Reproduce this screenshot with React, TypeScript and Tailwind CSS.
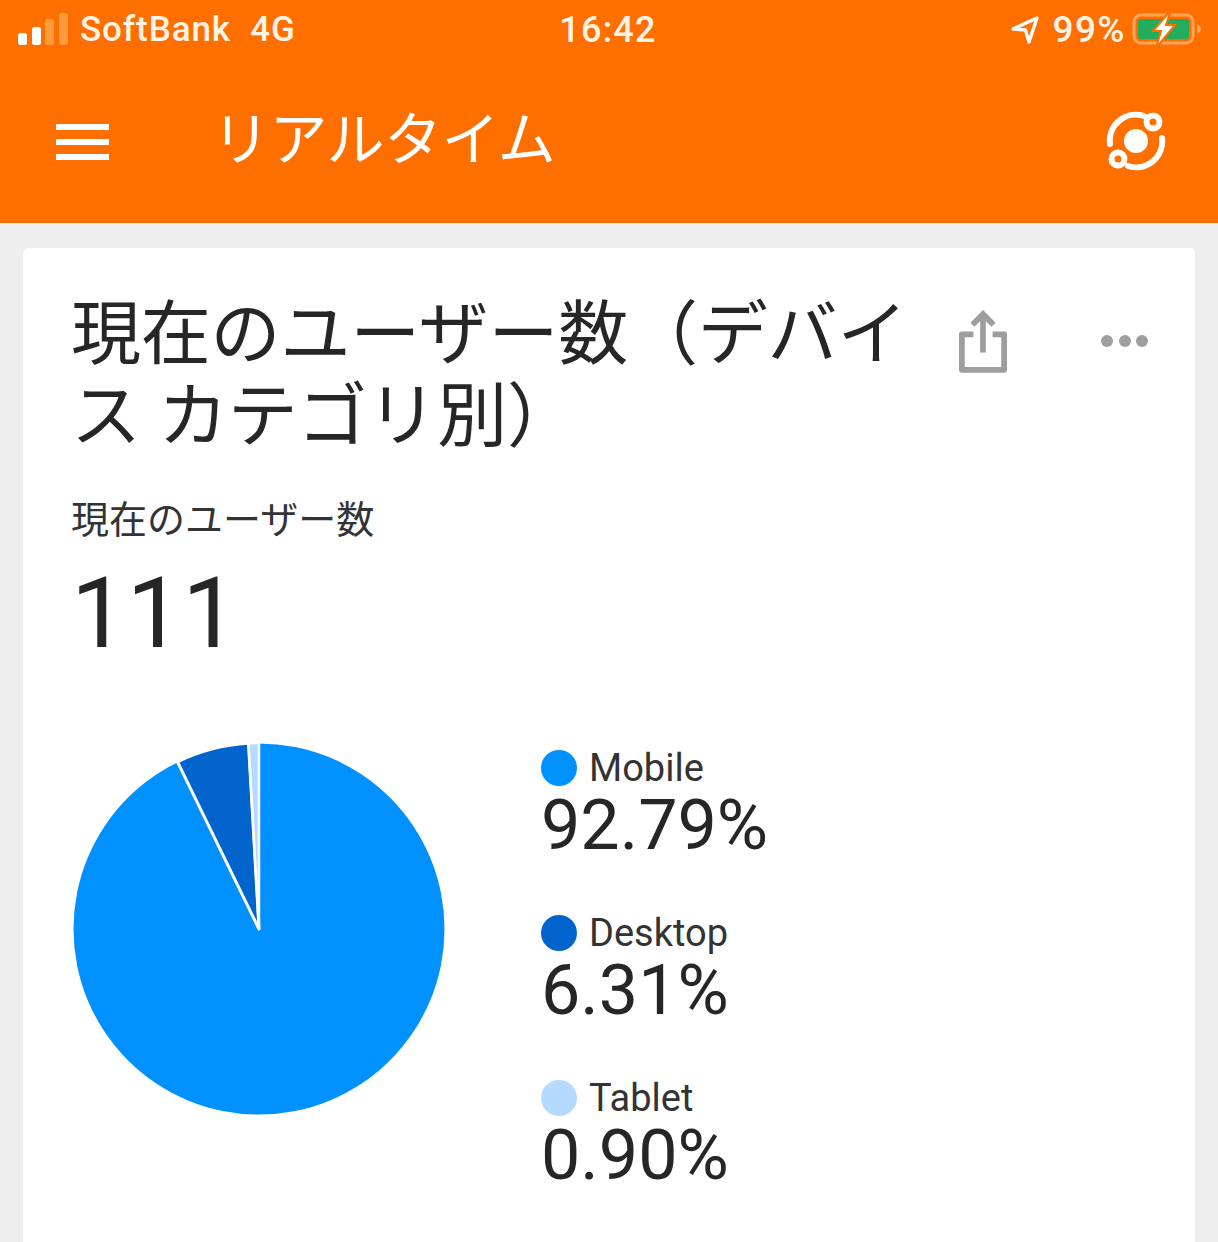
const JP = "font-['Roboto','Noto_Sans_CJK_JP',sans-serif]";

const slices = [
  { label: 'Mobile', value: '92.79%', dot: 'bg-[#0091ff]' },
  { label: 'Desktop', value: '6.31%', dot: 'bg-[#0064cc]' },
  { label: 'Tablet', value: '0.90%', dot: 'bg-[#b5daff]' },
];

function StatusBar() {
  return (
    <div className="flex h-[60px] items-center justify-between pl-[18px] pr-[14px] text-[#fff3e6]">
      <div className="flex w-[400px] items-center">
        <svg width="52" height="34" viewBox="0 0 52 34" className="mr-[10px] -mt-[2px]">
          <rect x="0" y="21" width="9" height="12" rx="2.5" fill="#fff" />
          <rect x="14" y="15" width="9" height="18" rx="2.5" fill="#fff" />
          <rect x="27" y="7" width="9" height="26" rx="2.5" fill="#ff9a3d" />
          <rect x="41" y="1" width="9" height="32" rx="2.5" fill="#ff9a3d" />
        </svg>
        <span className="font-['Roboto',sans-serif] text-[35px] font-medium tracking-[0.9px] whitespace-pre">SoftBank  4G</span>
      </div>
      <span className="-ml-[6px] font-['Roboto',sans-serif] text-[36px] font-medium tracking-[1.2px]">16:42</span>
      <div className="flex w-[400px] items-center justify-end">
        <svg width="28" height="28" viewBox="0 0 28 28" className="mr-[13px]" fill="none" stroke="#fff" strokeWidth="3.4" strokeLinejoin="round">
          <path d="M2 13 L26 2 L18 26 L14.5 14 Z" />
        </svg>
        <span className="mr-[6px] font-['Roboto',sans-serif] text-[37px] font-medium tracking-[1.4px]">99%</span>
        <svg width="72" height="38" viewBox="0 0 72 38" className="-mt-[2px]">
          <rect x="2" y="5" width="59" height="28" rx="7" fill="none" stroke="#ffa55c" strokeWidth="3" />
          <rect x="6" y="9" width="51" height="20" rx="3" fill="#22ad5c" />
          <path d="M65 14 Q69 16 69 19 Q69 22 65 24 Z" fill="#ffa55c" />
          <path d="M39 0 L21 21 L29 21 L24 38 L43 15 L34 15 Z" fill="#fff" stroke="#ff6f00" strokeWidth="2" />
        </svg>
      </div>
    </div>
  );
}

function Toolbar() {
  return (
    <div className="flex h-[163px] items-start pl-[56px] pr-[52px] pt-[44px] text-white">
      <div className="mt-[20px] flex w-[53px] flex-col gap-[9px]">
        <div className="h-[6px] bg-white" />
        <div className="h-[6px] bg-white" />
        <div className="h-[6px] bg-white" />
      </div>
      <h1 className={`${JP} ml-[103px] text-[58px] leading-[72px] font-normal tracking-[-0.5px]`}>リアルタイム</h1>
      <svg width="60" height="60" viewBox="0 0 60 60" fill="none" className="mt-[7px] ml-auto">
        <circle cx="30" cy="30" r="12" fill="#fff" />
        <path d="M4 33 A26 26 0 0 1 38 5" stroke="#fff" strokeWidth="6" strokeLinecap="round" />
        <path d="M56 27 A26 26 0 0 1 22 55" stroke="#fff" strokeWidth="6" strokeLinecap="round" />
        <circle cx="47" cy="11" r="6.5" stroke="#fff" strokeWidth="6" />
        <circle cx="12" cy="48" r="6.5" stroke="#fff" strokeWidth="6" />
      </svg>
    </div>
  );
}

function PieChart() {
  return (
    <svg width="372" height="372" viewBox="0 0 372 372" className="shrink-0">
      <circle cx="186" cy="186" r="185.5" fill="#0091ff" />
      <path d="M186 186 L104.5 18.8 A186 186 0 0 1 175.5 0.3 Z" fill="#0064cc" stroke="#fff" strokeWidth="3" strokeLinejoin="round" />
      <path d="M186 186 L175.5 0.3 A186 186 0 0 1 186 0 Z" fill="#b5daff" stroke="#fff" strokeWidth="2.5" strokeLinejoin="round" />
    </svg>
  );
}

export default function App() {
  return (
    <div className="h-[1242px] w-[1218px] overflow-hidden bg-[#eeeeee]">
      <header className="bg-[#ff6f00]">
        <StatusBar />
        <Toolbar />
      </header>
      <main className="mx-[23px] mt-[25px] h-[1000px] rounded-[5px] bg-white pl-[48px] pr-[47px] pt-[46px] text-[#262626]">
        <div className="flex items-start">
          <h2 className={`${JP} w-[842px] text-[70px] leading-[82px] font-normal tracking-[-0.2px]`}>現在のユーザー数（デバイス カテゴリ別）</h2>
          <svg width="48" height="66" viewBox="0 0 50 66" fill="none" stroke="#9e9e9e" className="mt-[15px] ml-[46px]">
            <path d="M15 25 H3 V62 H47 V25 H35" strokeWidth="6" strokeLinejoin="round" />
            <path d="M25 44 V5 M14 15 L25 4 L36 15" strokeWidth="6" />
          </svg>
          <div className="mt-[41px] ml-auto flex gap-[5.5px]">
            <div className="h-[12px] w-[12px] rounded-full bg-[#9e9e9e]" />
            <div className="h-[12px] w-[12px] rounded-full bg-[#9e9e9e]" />
            <div className="h-[12px] w-[12px] rounded-full bg-[#9e9e9e]" />
          </div>
        </div>
        <p className={`${JP} mt-[37px] text-[38px] leading-[50px] font-normal text-[#333333]`}>現在のユーザー数</p>
        <p className="mt-[18px] font-['Roboto',sans-serif] text-[99px] leading-[100px] font-normal">111</p>
        <div className="mt-[80px] ml-[2px] flex items-start">
          <PieChart />
          <div className="mt-[3px] ml-[96px] flex flex-col">
            {slices.map((s) => (
              <div key={s.label} className="h-[165px]">
                <div className="flex h-[44px] items-center">
                  <div className={`h-[36px] w-[36px] rounded-full ${s.dot}`} />
                  <span className="ml-[12px] font-['Roboto',sans-serif] text-[38px] text-[#333333]">{s.label}</span>
                </div>
                <div className="font-['Roboto',sans-serif] text-[70px] leading-[70px] font-normal">{s.value}</div>
              </div>
            ))}
          </div>
        </div>
      </main>
    </div>
  );
}
